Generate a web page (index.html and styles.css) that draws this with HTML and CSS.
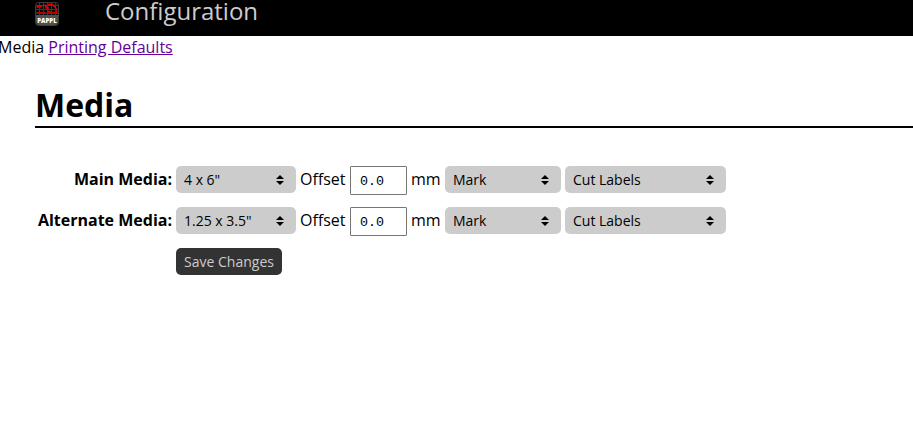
FILE: index.html
```html
<!DOCTYPE html>
<html lang="en">
<head>
<meta charset="utf-8">
<title>Media</title>
<link rel="stylesheet" href="styles.css">
</head>
<body>
<header class="header">
  <svg class="logo" viewBox="0 0 24 24" role="img" aria-label="PAPPL">
    <rect x=".5" y=".5" width="23" height="23" rx="3" fill="#080808" stroke="#3c3c3c"/>
    <path d="M4.5 1v12M8.5 1v12M12.5 1v12M16.5 1v12M20.5 1v12M1 3.5h22M1 7.5h22M1 11.5h22" stroke="#383838" fill="none"/>
    <path d="M2 10.5h9M13 10.5h9M13 6.5v3h3M21.5 6v4" stroke="#b80000" fill="none"/>
    <path d="M2 4.5h5M2.5 3v3M8 3.5h3v3M11 6h3M13 2.5h5M18 3l3 3" stroke="#f00000" stroke-width="1.5" fill="none"/>
    <path d="M1 13h22v7q0 3-3 3H4q-3 0-3-3z" fill="#505050"/>
    <text class="logo-text" x="2.3" y="20.5" textLength="19.4" lengthAdjust="spacingAndGlyphs">PAPPL</text>
  </svg>
  <span class="title">Configuration</span>
</header>
<nav class="nav">Media <a href="#">Printing Defaults</a></nav>
<main class="content">
  <h1 class="heading">Media</h1>
  <form class="form">
    <div class="row">
      <span class="label">Main Media:</span>
      <span class="select size"><select><option>4 x 6"</option></select><svg class="arrows" viewBox="0 0 8 10"><path d="M4 0 8 4H0zM0 6h8L4 10z"/></svg></span>
      <span class="offset">Offset</span>
      <input class="number" value="0.0">
      <span class="unit">mm</span>
      <span class="select tracking"><select><option>Mark</option></select><svg class="arrows" viewBox="0 0 8 10"><path d="M4 0 8 4H0zM0 6h8L4 10z"/></svg></span>
      <span class="select type"><select><option>Cut Labels</option></select><svg class="arrows" viewBox="0 0 8 10"><path d="M4 0 8 4H0zM0 6h8L4 10z"/></svg></span>
    </div>
    <div class="row">
      <span class="label">Alternate Media:</span>
      <span class="select size"><select><option>1.25 x 3.5"</option></select><svg class="arrows" viewBox="0 0 8 10"><path d="M4 0 8 4H0zM0 6h8L4 10z"/></svg></span>
      <span class="offset">Offset</span>
      <input class="number" value="0.0">
      <span class="unit">mm</span>
      <span class="select tracking"><select><option>Mark</option></select><svg class="arrows" viewBox="0 0 8 10"><path d="M4 0 8 4H0zM0 6h8L4 10z"/></svg></span>
      <span class="select type"><select><option>Cut Labels</option></select><svg class="arrows" viewBox="0 0 8 10"><path d="M4 0 8 4H0zM0 6h8L4 10z"/></svg></span>
    </div>
    <div class="row">
      <span class="label"></span>
      <button class="save" type="button">Save Changes</button>
    </div>
  </form>
</main>
</body>
</html>
```
FILE: styles.css
```css
* { box-sizing: border-box; }
body {
  margin: 0;
  background: #fff;
  color: #000;
  font: 16px/22px "Open Sans", "Noto Sans", sans-serif;
  overflow: hidden;
}
.header {
  display: flex;
  height: 36px;
  padding: 2px 0 0 35px;
  background: #000;
}
.logo { width: 24px; height: 24px; }
.logo-text { font: 800 7px "Open Sans", sans-serif; fill: #fff; }
.title {
  margin: -2px 0 0 46px;
  color: #ccc;
  font-size: 24px;
  line-height: 21px;
}
.nav { height: 24px; margin-left: -2px; }
.nav a { color: #609; }
.content { padding-left: 35px; }
.heading {
  height: 45px;
  margin: 23px 0 38px;
  border-bottom: 2px solid #000;
  font-size: 32px;
  line-height: 44px;
}
.row {
  display: flex;
  gap: 4px;
  height: 29px;
  margin-bottom: 12px;
}
.label {
  flex: none;
  width: 137px;
  padding-top: 2px;
  font-weight: bold;
  text-align: right;
  white-space: nowrap;
}
.offset { width: 46px; padding-top: 2px; }
.unit { width: 30px; padding-top: 2px; }
.select {
  display: grid;
  height: 27px;
  align-items: center;
}
.select select, .arrows { grid-area: 1 / 1; }
.select select {
  width: 100%;
  height: 27px;
  padding: 0 8px;
  border: 0;
  border-radius: 5px;
  background: #ccc;
  color: #000;
  font: 14px "Open Sans", sans-serif;
  appearance: none;
}
.size { width: 120px; }
.tracking { width: 116px; }
.type { width: 161px; }
.arrows {
  justify-self: end;
  width: 8px;
  height: 10px;
  margin-right: 12px;
  pointer-events: none;
}
.number {
  width: 57px;
  height: 29px;
  padding: 1px 9px 0;
  border: 1px solid #767676;
  border-radius: 1px;
  color: #000;
  font: 13.33px "Liberation Mono", monospace;
}
.save {
  width: 106px;
  height: 27px;
  padding: 0;
  border: 0;
  border-radius: 5px;
  background: #333;
  color: #ccc;
  font: 14px "Open Sans", sans-serif;
}
```
